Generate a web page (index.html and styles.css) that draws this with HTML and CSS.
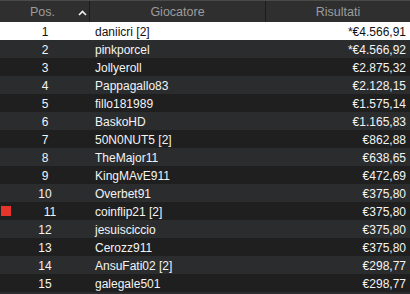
FILE: index.html
```html
<!DOCTYPE html>
<html>
<head>
<meta charset="utf-8">
<link rel="stylesheet" href="styles.css">
</head>
<body>
<div class="table">
  <div class="head">
    <div class="hcell pos">Pos.<svg class="chev" width="9" height="6" viewBox="0 0 9 6"><path d="M1 5 L4.5 1.5 L8 5" fill="none" stroke="#f2f2f2" stroke-width="1.6"/></svg></div>
    <div class="hcell name">Giocatore</div>
    <div class="hcell res">Risultati</div>
  </div>
  <div class="row sel"><div class="c pos">1</div><div class="c name">daniicri [2]</div><div class="c res">*€4.566,91</div></div>
  <div class="row even"><div class="c pos">2</div><div class="c name">pinkporcel</div><div class="c res">*€4.566,92</div></div>
  <div class="row odd"><div class="c pos">3</div><div class="c name">Jollyeroll</div><div class="c res">€2.875,32</div></div>
  <div class="row even"><div class="c pos">4</div><div class="c name">Pappagallo83</div><div class="c res">€2.128,15</div></div>
  <div class="row odd"><div class="c pos">5</div><div class="c name">fillo181989</div><div class="c res">€1.575,14</div></div>
  <div class="row even"><div class="c pos">6</div><div class="c name">BaskoHD</div><div class="c res">€1.165,83</div></div>
  <div class="row odd"><div class="c pos">7</div><div class="c name">50N0NUT5 [2]</div><div class="c res">€862,88</div></div>
  <div class="row even"><div class="c pos">8</div><div class="c name">TheMajor11</div><div class="c res">€638,65</div></div>
  <div class="row odd"><div class="c pos">9</div><div class="c name">KingMAvE911</div><div class="c res">€472,69</div></div>
  <div class="row even"><div class="c pos">10</div><div class="c name">Overbet91</div><div class="c res">€375,80</div></div>
  <div class="row odd mark"><span class="flag"></span><div class="c pos shifted">11</div><div class="c name">coinflip21 [2]</div><div class="c res">€375,80</div></div>
  <div class="row even"><div class="c pos">12</div><div class="c name">jesuisciccio</div><div class="c res">€375,80</div></div>
  <div class="row odd"><div class="c pos">13</div><div class="c name">Cerozz911</div><div class="c res">€375,80</div></div>
  <div class="row even"><div class="c pos">14</div><div class="c name">AnsuFati02 [2]</div><div class="c res">€298,77</div></div>
  <div class="row odd"><div class="c pos">15</div><div class="c name">galegale501</div><div class="c res">€298,77</div></div>
</div>
</body>
</html>
```
FILE: styles.css
```css
html, body {
  margin: 0;
  padding: 0;
  background: #2b2c2e;
}
body {
  font-family: "Liberation Sans", Arial, sans-serif;
  font-size: 12px;
  width: 410px;
  height: 294px;
  overflow: hidden;
}
.table {
  display: flex;
  flex-direction: column;
}
.head {
  display: grid;
  grid-template-columns: 90px 176px 144px;
  height: 22px;
  background: #2f2f2f;
  border-top: 1px solid #4a4a4a;
  box-sizing: border-box;
}
.hcell {
  color: #9c9c9c;
  font-size: 12.5px;
  line-height: 15px;
  padding-top: 4px;
  text-align: center;
  border-right: 1px solid #1c1c1c;
  position: relative;
}
.hcell.res {
  border-right: none;
}
.hcell.pos {
  text-indent: -4px;
}
.chev {
  position: absolute;
  left: 78px;
  top: 9px;
}
.row {
  display: grid;
  grid-template-columns: 90px 176px 144px;
  height: 18px;
  box-sizing: border-box;
  padding-top: 3px;
  line-height: 15px;
  color: #f4f4f4;
  position: relative;
}
.row.odd { background: #1f1f1f; }
.row.even { background: #2b2c2e; }
.row.sel { background: #ffffff; color: #111111; }
.c.pos { text-align: center; }
.c.pos.shifted { padding-left: 10px; }
.c.name { padding-left: 5px; }
.c.res { text-align: right; padding-right: 4px; }
.flag {
  position: absolute;
  left: 1px;
  top: 4px;
  width: 10px;
  height: 10px;
  background: #e8352b;
}
```
